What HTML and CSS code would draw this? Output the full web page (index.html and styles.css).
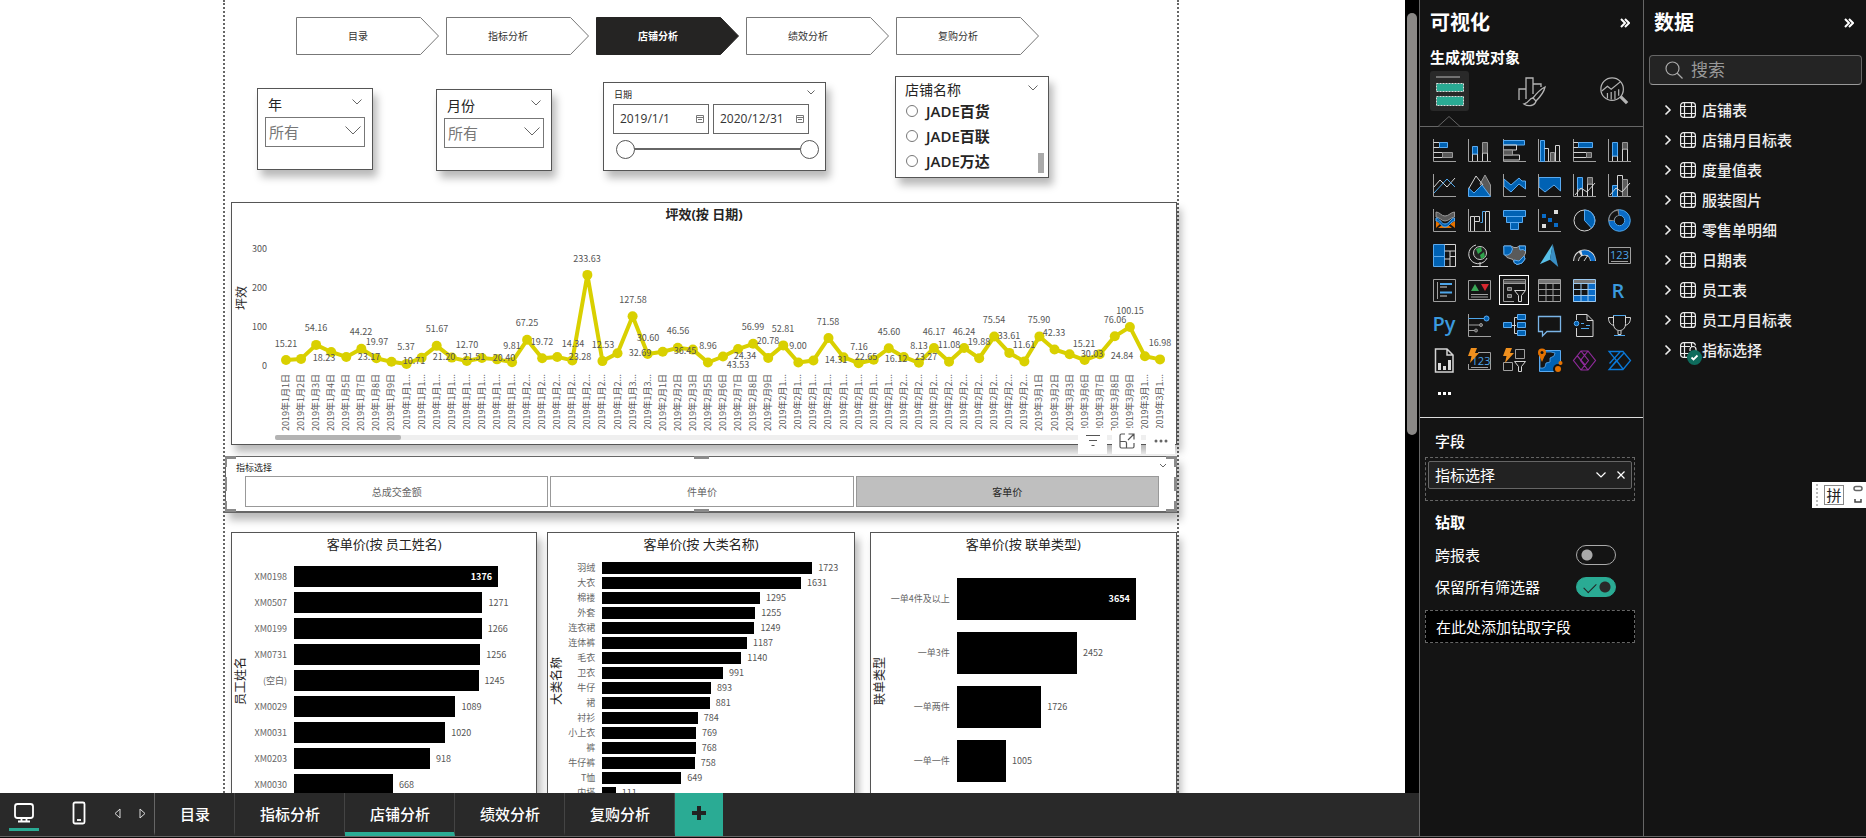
FILE: index.html
```html
<!DOCTYPE html>
<html lang="zh-CN">
<head>
<meta charset="utf-8">
<title>店铺分析</title>
<link rel="stylesheet" href="styles.css">
</head>
<body>
<div class="app">
  <main class="workspace">
    <div class="stage">
      <div class="canvas">
        <div class="page">
          <nav class="steps">
            <button class="step"><svg viewBox="0 0 143 38"><path d="M.5.5H124.500L142.500 19 124.500 37.500H.5Z"/></svg><span>目录</span></button>
            <button class="step"><svg viewBox="0 0 143 38"><path d="M.5.5H124.500L142.500 19 124.500 37.500H.5Z"/></svg><span>指标分析</span></button>
            <button class="step current"><svg viewBox="0 0 143 38"><path d="M.5.5H124.500L142.500 19 124.500 37.500H.5Z"/></svg><span>店铺分析</span></button>
            <button class="step"><svg viewBox="0 0 143 38"><path d="M.5.5H124.500L142.500 19 124.500 37.500H.5Z"/></svg><span>绩效分析</span></button>
            <button class="step"><svg viewBox="0 0 143 38"><path d="M.5.5H124.500L142.500 19 124.500 37.500H.5Z"/></svg><span>复购分析</span></button>
          </nav>

          <div class="slicers">
            <section class="card slicer year">
              <header><label for="year">年</label><svg class="chev" viewBox="0 0 10 6"><path d="M.5.5 5 5 9.500.5"/></svg></header>
              <div class="field"><select id="year"><option>所有</option></select><svg viewBox="0 0 16 9"><path d="M.5.5 8 8 15.500.5"/></svg></div>
            </section>
            <section class="card slicer month">
              <header><label for="month">月份</label><svg class="chev" viewBox="0 0 10 6"><path d="M.5.5 5 5 9.500.5"/></svg></header>
              <div class="field"><select id="month"><option>所有</option></select><svg viewBox="0 0 16 9"><path d="M.5.5 8 8 15.500.5"/></svg></div>
            </section>
            <section class="card slicer dates">
              <header><span>日期</span><svg class="chev" viewBox="0 0 10 6"><path d="M1.500.5 5 4 8.500.5"/></svg></header>
              <div class="range">
                <div class="date"><input type="text" value="2019/1/1" aria-label="开始日期"><svg viewBox="0 0 8 8"><path d="M.5.5h7v7h-7zM.5 2.500h7M2 4.500h4"/></svg></div>
                <div class="date"><input type="text" value="2020/12/31" aria-label="结束日期"><svg viewBox="0 0 8 8"><path d="M.5.5h7v7h-7zM.5 2.500h7M2 4.500h4"/></svg></div>
              </div>
              <div class="slider"><input type="range" value="0" aria-label="开始"><input type="range" value="100" aria-label="结束"></div>
            </section>
            <section class="card slicer shops">
              <header><span>店铺名称</span><svg class="chev" viewBox="0 0 10 6"><path d="M.5.5 5 5 9.500.5"/></svg></header>
              <div class="options">
                <div>
                  <label><input type="radio" name="shop">JADE百货</label>
                  <label><input type="radio" name="shop">JADE百联</label>
                  <label><input type="radio" name="shop">JADE万达</label>
                </div>
                <i class="thumb"></i>
              </div>
            </section>
          </div>

          <section class="card trend">
            <h2>坪效(按 日期)</h2>
            <svg id="trend" viewBox="232 227 944 217"></svg>
            <div class="visual-tools">
              <button aria-label="筛选"><svg viewBox="0 0 18 18"><path d="M2 3.500h14M5 8.500h8M7.500 13.500h3"/></svg></button>
              <button aria-label="焦点模式"><svg viewBox="0 0 18 18"><path d="M7 2H3.500A1.500 1.500 0 0 0 2 3.500v11A1.500 1.500 0 0 0 3.500 16h11a1.500 1.500 0 0 0 1.500-1.500V11M2 9.500h5A1.500 1.500 0 0 1 8.500 11v5M10.500 2H16v5.500M16 2l-6 6"/></svg></button>
              <button aria-label="更多"><svg class="solid" viewBox="0 0 18 18"><circle cx="4" cy="9" r="1.500"/><circle cx="9" cy="9" r="1.500"/><circle cx="14" cy="9" r="1.500"/></svg></button>
            </div>
          </section>

          <section class="card metric">
            <header><span>指标选择</span><svg class="chev" viewBox="0 0 10 6"><path d="M2 1 5 4 8 1"/></svg></header>
            <div class="choices">
              <button>总成交金额</button>
              <button>件单价</button>
              <button class="picked">客单价</button>
            </div>
          </section>

          <div class="charts">
            <section class="card bars staff"><h2>客单价(按 员工姓名)</h2><div class="plot"><span class="axis">员工姓名</span><div class="rows" id="staff"></div></div></section>
            <section class="card bars kinds"><h2>客单价(按 大类名称)</h2><div class="plot"><span class="axis">大类名称</span><div class="rows" id="kinds"></div></div></section>
            <section class="card bars orders"><h2>客单价(按 联单类型)</h2><div class="plot"><span class="axis">联单类型</span><div class="rows" id="orders"></div></div></section>
          </div>
        </div>
      </div>
      <div class="scroll"><i></i></div>
    </div>

    <nav class="tabs">
      <button class="device on" aria-label="桌面布局"><svg viewBox="0 0 22 22"><rect x="2" y="2" width="18" height="14" rx="2.500"/><path d="M8.500 16v3M13.500 16v3M5 19.500h12"/></svg></button>
      <button class="device phone" aria-label="移动布局"><svg viewBox="0 0 14 24"><rect x="1.500" y="1.500" width="11" height="21" rx="1.500"/><path d="M5 19h4"/></svg></button>
      <button class="arrow" aria-label="上一页"><svg viewBox="0 0 7 11"><path d="M6 1v9L1 5.500Z"/></svg></button>
      <button class="arrow" aria-label="下一页"><svg viewBox="0 0 7 11"><path d="M1 1v9l5-4.500Z"/></svg></button>
      <button class="tab first">目录</button>
      <button class="tab">指标分析</button>
      <button class="tab active">店铺分析</button>
      <button class="tab">绩效分析</button>
      <button class="tab">复购分析</button>
      <button class="add" aria-label="新建页"><svg viewBox="0 0 14 14"><path d="M7 0v14M0 7h14"/></svg></button>
    </nav>
  </main>

  <aside class="pane visuals">
    <header class="pane-head"><h1>可视化</h1><button aria-label="折叠"><svg viewBox="0 0 10 10"><path d="M1 1l4 4-4 4M5 1l4 4-4 4"/></svg></button></header>
    <h3>生成视觉对象</h3>
    <div class="modes">
      <button class="on" aria-label="生成"><svg viewBox="0 0 30 32"><path d="M1 2h24" stroke="#bbb"/><g fill="#2aab94" stroke="#ddd" stroke-dasharray="2 1"><rect x="1.500" y="8.500" width="27" height="8"/><rect x="1.500" y="21.500" width="27" height="9"/></g></svg></button>
      <button aria-label="格式"><svg viewBox="0 0 30 32"><g fill="none" stroke="#b4b4b4" stroke-width="1.300"><path d="M2 25V14h7V3h7v16M9 14v10M16 9h8v3"/><path d="M28 12c-4 2-9 7-12 11l3 3c4-4 8-9 9-14Z"/><path d="M16 23c-4 0-4 5-9 6 4 3 11 2 12-3"/></g></svg></button>
      <button aria-label="分析"><svg viewBox="0 0 32 32"><g fill="none" stroke="#b4b4b4" stroke-width="1.300"><circle cx="14" cy="14" r="12"/><path d="M3 16l6-5 4 3 10-8M9 18v6M13 17v8M17 16v9M21 14v7"/><path d="M23 22l7 7" stroke-width="3.500"/></g></svg></button>
    </div>
    <svg class="notch" viewBox="0 0 22 11"><path d="M0 10.500 11 .5l11 10"/></svg>
    <div class="gallery" id="gallery">
      <button aria-label="堆积条形图"><svg viewBox="0 0 23 23"><path class="ax" d="M.5 0V22.500H23"/><path class="w" d="M.5 3.500h6v5h-6M.5 13.500h9v5h-9"/><path class="b" d="M6.500 3.500h8v5h-8z"/><path class="g" d="M9.500 13.500h10v5h-10z"/></svg></button>
      <button aria-label="堆积柱形图"><svg viewBox="0 0 23 23"><path class="ax" d="M.5 0V22.500H23"/><path class="w" d="M4.500 22v-7h5v7M14.500 22v-8h5v8"/><path class="b" d="M4.500 7.500h5v7.500h-5z"/><path class="g" d="M14.500 3.500h5v10.500h-5z"/></svg></button>
      <button aria-label="簇状条形图"><svg viewBox="0 0 23 23"><path class="ax" d="M.5 0V22.500H23"/><path class="b" d="M.5 1.500h21v4.500h-21z"/><path class="w" d="M.5 6h13v5H.5M.5 16h16v5H.5"/><path class="g" d="M.5 11h9v5h-9z"/></svg></button>
      <button aria-label="簇状柱形图"><svg viewBox="0 0 23 23"><path class="ax" d="M.5 0V22.500H23"/><path class="b" d="M2.500 1.500h4v21h-4z"/><path class="w" d="M6.500 9.500h4v13M17.500 22V6.500h4V22"/><path class="g" d="M12.500 13.500h4v9h-4z"/></svg></button>
      <button aria-label="百分比堆积条形图"><svg viewBox="0 0 23 23"><path class="ax" d="M.5 0V22.500H23"/><path class="w" d="M.5 3.500h5v5h-5M.5 13.500h13v5H.5"/><path class="b" d="M5.500 3.500h14v5h-14z"/><path class="g" d="M13.500 13.500h5v5h-5z"/></svg></button>
      <button aria-label="百分比堆积柱形图"><svg viewBox="0 0 23 23"><path class="ax" d="M.5 0V22.500H23"/><path class="w" d="M4.500 22v-5h5v5M14.500 22V10h5v12"/><path class="b" d="M4.500 3.500h5V17h-5z"/><path class="g" d="M14.500 3.500h5V10h-5z"/></svg></button>

      <button aria-label="折线图"><svg viewBox="0 0 23 23"><path class="ax" d="M.5 0V22.500H23"/><path class="w" d="M1 13 7 6l7 7 8-9"/><path class="l" d="M1 19 14 5l8 8"/></svg></button>
      <button aria-label="分区图"><svg viewBox="0 0 23 23"><path class="g" d="M12 10 17 1l5.500 10v11z"/><path class="w" d="M.5 15 8 2l7 9M.5 15v7"/><path class="b" d="M.5 14 6 19l8-8 8.500 11.500H.5Z"/></svg></button>
      <button aria-label="堆积面积图"><svg viewBox="0 0 23 23"><path class="b" d="M1 5l7 6 8-7 3 3h3.500v8L16 10l-8 8-7-6Z"/><path class="ax" d="M.5 0V22.500H23"/></svg></button>
      <button aria-label="百分比堆积面积图"><svg viewBox="0 0 23 23"><path class="b" d="M1 3.500h21.500V17L16 11l-9 7-6-5Z"/><path class="ax" d="M.5 0V22.500H23"/></svg></button>
      <button aria-label="折线和堆积柱形图"><svg viewBox="0 0 23 23"><path class="ax" d="M.5 0V22.500H23"/><path class="w" d="M4.500 22v-8h5v8M14.500 22V10h5v12"/><path class="b" d="M4.500 3.500h5V15h-5z"/><path class="g" d="M14.500 3.500h5V10h-5z"/><path class="w" d="M2 21l6-7 6 4 8-9"/></svg></button>
      <button aria-label="折线和簇状柱形图"><svg viewBox="0 0 23 23"><path class="ax" d="M.5 0V22.500H23"/><path class="b" d="M4.500 11.500h5v11h-5z"/><path class="w" d="M9.500 22V1.500h5V22"/><path class="g" d="M14.500 5.500h5v17h-5z"/><path class="w" d="M2 21l6-7 6 4 8-9"/></svg></button>

      <button aria-label="功能区图表"><svg viewBox="0 0 23 23"><path d="M3 12l4 3-4 4zM22 12l-5 3 5 4zM5 19l4-3h6l4 3z" fill="#e57200"/><path class="g" d="M3 3c4 0 5 4 9 4s6-4 9.500-4v5c-3.500 0-5.500 4-9.500 4S7 8 3 8z"/><path class="b" d="M3 9c4 0 5 6 9 6s6-6 9.500-6v3c-3.500 0-5.500 6-9.500 6s-5-6-9-6z"/><path class="ax" d="M.5 0V22.500H23"/></svg></button>
      <button aria-label="瀑布图"><svg viewBox="0 0 23 23"><path class="ax" d="M.5 0V22.500H23"/><path class="w" d="M2.500 22V7.500h4V22M6.500 7.500h5v5h-5M17.500 22V2.500h4V22"/><path class="l" d="M12.500 13.500h2v-11h3"/></svg></button>
      <button aria-label="漏斗图"><svg viewBox="0 0 23 23"><path class="b" d="M.5 1.500h22v6H.5zM3.500 7.500h16v6h-16zM7.500 13.500h8v7h-8z"/></svg></button>
      <button aria-label="散点图"><svg viewBox="0 0 23 23"><path class="ax" d="M.5 0V22.500H23"/><path fill="#0a6cc8" d="M4 5h4v4H4zM10 9h4v4h-4zM16 14h4v4h-4z"/><path fill="#ddd" d="M16 1h4v4h-4zM4 15h4v4H4z"/></svg></button>
      <button aria-label="饼图"><svg viewBox="0 0 23 23"><circle class="w" cx="11.500" cy="11.500" r="10.500"/><path class="b" d="M11.500 1a10.500 10.500 0 0 1 7 18L11.500 11.500Z"/></svg></button>
      <button aria-label="环形图"><svg viewBox="0 0 23 23"><circle cx="11.500" cy="11.500" r="8" fill="none" stroke="#0a6cc8" stroke-width="5.500"/><circle class="l" cx="11.500" cy="11.500" r="10.800"/><circle class="l" cx="11.500" cy="11.500" r="5.200"/><path d="M3.500 12a8 8 0 0 1 7.500-8.500" fill="none" stroke="#888" stroke-width="6.500"/><path d="M3.500 11a8 8 0 0 1 6.500-7" fill="none" stroke="#141414" stroke-width="4.500"/></svg></button>

      <button aria-label="树状图"><svg viewBox="0 0 23 23"><path class="b" d="M.5.5h11v12H.5zM.5 12.500h11v10H.5z"/><path class="w" d="M11.500.5h11v22h-11M11.500 7h11M17 7v15.500M11.500 15H17M17 12.500h5.500"/></svg></button>
      <button aria-label="地图"><svg viewBox="0 0 23 23"><circle cx="12" cy="9" r="6.500" fill="#222" stroke="#ccc"/><path d="M8 5l5-2 1 4-4 3zM12 11l4-3 1 5-4 2z" fill="#2fa34b"/><path class="w" d="M8 1a9.500 9.500 0 1 0 11 13M12 18v4M4 22.500h16"/></svg></button>
      <button aria-label="着色地图"><svg viewBox="0 0 23 23"><path d="M1 2h7l3 1.500h3L16 2h6.500v7L21 12l1 3-3 4-5 1.500-3-2-1-3-6-2-3-4z" fill="#5a5a5a" stroke="#aaa"/><path class="b" d="M.8 2H8l1.500 3L8 9l-3 2H1zM16 2h6.500v5L20 5.500 17 6zM11 16l5 1 5-5 1 3-3 4-5 1.500-3-2z"/></svg></button>
      <button aria-label="Azure 地图"><svg viewBox="0 0 23 25"><path d="M15 0 1 22l11-5z" fill="#58c0e8"/><path d="M15 0l6 25-9-8z" fill="#3a8fc4"/></svg></button>
      <button aria-label="仪表"><svg viewBox="0 0 23 23"><path d="M3 17a8.500 8.500 0 0 1 17 0" fill="none" stroke="#ddd" stroke-width="6"/><path d="M3 17a8.500 8.500 0 0 1 4-7" fill="none" stroke="#222" stroke-width="4"/><path d="M9 9a8.500 8.500 0 0 1 11 8" fill="none" stroke="#0a6cc8" stroke-width="4.500"/><path class="w" d="M11 17l4-6"/></svg></button>
      <button aria-label="卡片"><svg viewBox="0 0 23 23"><path class="ax" d="M.5 3.500h22v16H.5zM3 17.500h17"/><text x="11.500" y="15" text-anchor="middle" class="num">123</text></svg></button>

      <button aria-label="多行卡"><svg viewBox="0 0 23 23"><path class="ax" d="M.5.500h22v22H.5zM4.500 3v17"/><path class="w" d="M7 8h7M7 17h7"/><path class="l" stroke-width="2" d="M7 5h12M7 13.500h12"/></svg></button>
      <button aria-label="KPI"><svg viewBox="0 0 23 23"><path class="ax" d="M.5 1.500h22v19H.5zM3 15.500h17M3 18h17"/><path d="M3 12 7 5l4 7z" fill="#3aa655"/><path d="M13 5h8l-4 7z" fill="#d8282f"/></svg></button>
      <button class="selected" aria-label="切片器"><svg viewBox="0 0 23 23"><path class="ax" d="M11 22.500H.5V.5h22V11M.5 4.500h22"/><path d="M1 1.500h21v2.500H1z" fill="#666"/><path class="g" d="M4.500 8.500h4v3h-4zM4.500 15.500h4v3h-4z"/><path class="w" d="M11.500 11.500h11l-4 5v6h-3v-6z"/></svg></button>
      <button aria-label="表"><svg viewBox="0 0 23 23"><path d="M1 1h21v3H1z" fill="#777"/><path class="ax" d="M.5.500h22v22H.5zM.5 4.500h22M.5 10.500h22M.5 16.500h22M8 4.500v18M15 4.500v18"/></svg></button>
      <button aria-label="矩阵"><svg viewBox="0 0 23 23"><path d="M1 1h21v3H1z" fill="#777"/><path fill="#0a6cc8" d="M15 5h8v18H0v-6h15z"/><path stroke="#9cc8ee" fill="none" d="M.5.500h22v22H.5zM.5 4.500h22M.5 10.500h22M.5 16.500h22M8 4.500v18M15 4.500v18"/></svg></button>
      <button aria-label="R 脚本"><svg viewBox="0 0 23 23"><text x="10" y="19" text-anchor="middle" class="lang">R</text></svg></button>

      <button aria-label="Python 脚本"><svg viewBox="0 0 23 23"><text x="11" y="17" text-anchor="middle" class="lang">Py</text></svg></button>
      <button aria-label="关键影响者"><svg viewBox="0 0 23 23"><path class="ax" d="M.5 0V22.500H23M.5 11H12M.5 16.500H7"/><path class="l" d="M.5 4.500H16"/><circle class="b" cx="18.500" cy="4.500" r="2.500"/><circle class="g" cx="13" cy="11" r="1.500"/><circle class="g" cx="8" cy="16.500" r="1.500"/></svg></button>
      <button aria-label="分解树"><svg viewBox="0 0 23 23"><path class="w" d="M8 11.500h5M14 3.500h-2.500v16H14"/><path class="b" d="M.5 8.500h8v5h-8zM14.500.5h8v5h-8zM14.500 8.500h8v5h-8zM14.500 16.500h8v5h-8z"/></svg></button>
      <button aria-label="问答"><svg viewBox="0 0 23 23"><path d="M.5 2.500h22v15H9L4.500 22v-4.500h-4z" fill="none" stroke="#7ab4e6" stroke-width="1.300"/></svg></button>
      <button aria-label="智能叙述"><svg viewBox="0 0 23 23"><path class="w" d="M3.500 6V.5H14l6 6v16H3.500V14M14 .5v6h6"/><circle class="b" cx="3.500" cy="9.500" r="2.300"/><path class="l" d="M8 9.500h3M8 14.500h8M13 11.500h4"/></svg></button>
      <button aria-label="目标"><svg viewBox="0 0 23 23"><path class="w" d="M5.500 1.500h12v8c0 5-3 7-6 7s-6-2-6-7zM5.500 3.500H.5c0 5 2 7 5.500 8M17.500 3.500h5c0 5-2 7-5.500 8M10 16.500v4h3v-4"/><path class="l" d="M5.500 1.500h12M6 21.500h11"/></svg></button>

      <button aria-label="分页报表"><svg viewBox="0 0 23 23"><path class="w" stroke-width="1.500" d="M2.500 0H14l6 6v17H2.500zM14 0v6h6"/><path fill="#ddd" d="M5 14h3v7H5zM10 17h3v4h-3zM15 11h3v10h-3z"/></svg></button>
      <button aria-label="新卡片"><svg viewBox="0 0 23 23"><path class="ax" d="M10 3.500h12.500v17H.5V15M3 18.500h17"/><text x="13" y="16" text-anchor="middle" class="num">123</text><path d="M3-1h6L7 4h4L2 14l1.500-7H0z" fill="#f0901e"/></svg></button>
      <button aria-label="新切片器"><svg viewBox="0 0 23 23"><path class="ax" d="M12.500.5h9v9h-9zM.5 13.500h9v8h-9z"/><path class="w" d="M11.500 12.500h11l-4 5v5h-3v-5z"/><path d="M3-1h6L7 4h4L2 14l1.500-7H0z" fill="#f0901e"/></svg></button>
      <button aria-label="ArcGIS"><svg viewBox="0 0 23 23"><path class="b" d="M1.500 1.500h21v21h-21z"/><path d="M2 3h11l4 1-1 3-4 2v4l-4 1-1 4-2 1H2z" fill="#141414" stroke="#5aaaf0" stroke-width=".8"/><circle cx="4" cy="3.500" r="4" fill="#e57200"/><path d="M.5 5h7L4 13z" fill="#e57200"/><circle cx="4" cy="3.500" r="1.500" fill="#141414"/><circle cx="20" cy="20" r="5" fill="#141414"/><circle cx="20" cy="20" r="3" fill="#e57200"/><circle cx="22.500" cy="14" r="2" fill="#e57200"/></svg></button>
      <button aria-label="Power Apps"><svg viewBox="0 0 23 23"><path d="M8 2h7l7.500 9.500L15 21H8L.5 11.500zM8 2l7.500 9.500L8 21M15 2 7.500 11.500 15 21M4 6.500l8 9.500" fill="none" stroke="#8e2a9a" stroke-width="1.200"/></svg></button>
      <button aria-label="Power Automate"><svg viewBox="0 0 23 23"><path d="M1 2.500h14l7.500 9-7.500 9H1l7.500-9zM12 3 1.500 14.500M16 4 1.500 20M8.500 11.500 15 20" fill="none" stroke="#0a78d8" stroke-width="1.300"/></svg></button>
      <button aria-label="更多视觉对象"><svg viewBox="0 0 23 23"><path fill="#fff" d="M5 8h3v3H5zM10 8h3v3h-3zM15 8h3v3h-3z"/></svg></button>
    </div>

    <div class="wells">
      <h4>字段</h4>
      <div class="well"><div class="pill"><span>指标选择</span><button aria-label="菜单"><svg viewBox="0 0 12 12"><path d="M1.500 3.500 6 8l4.500-4.500"/></svg></button><button aria-label="删除"><svg viewBox="0 0 12 12"><path d="M2.500 2.500l7 7M9.500 2.500l-7 7"/></svg></button></div></div>
      <h4 class="strong">钻取</h4>
      <label class="toggle">跨报表<input type="checkbox"></label>
      <label class="toggle">保留所有筛选器<input type="checkbox" checked></label>
      <div class="drop">在此处添加钻取字段</div>
    </div>
  </aside>

  <aside class="pane data">
    <header class="pane-head"><h1>数据</h1><button aria-label="折叠"><svg viewBox="0 0 10 10"><path d="M1 1l4 4-4 4M5 1l4 4-4 4"/></svg></button></header>
    <div class="search"><svg viewBox="0 0 18 18"><circle cx="7.500" cy="7.500" r="6.500"/><path d="M12 12l5.500 5.500"/></svg><input type="text" placeholder="搜索" aria-label="搜索"></div>
    <ul class="tables" id="tables"></ul>
  </aside>

  <footer class="status"></footer>

  <div class="ime"><i class="grip"></i><b>拼</b><svg viewBox="0 0 10 20"><path d="M3 1.500h4a2 2 0 0 1 0 4H3a2 2 0 0 1 0-4Z" stroke="#666"/><path d="M2 14v3h6v-3" stroke="#444"/></svg></div>
</div>
<script src="charts.js"></script>
</body>
</html>
```

FILE: styles.css
```css
* { box-sizing: border-box; }
body, h1, h2, h3, h4, ul { margin: 0; padding: 0; }
body {
  font-family: "Open Sans", "Noto Sans CJK SC", sans-serif;
  font-size: 15px;
  line-height: 20px;
  color: #fff;
  background: #141414;
}
button, input, select { font: inherit; color: inherit; }
button { background: none; border: 0; padding: 0; margin: 0; cursor: pointer; }
svg { display: block; }

.app {
  position: relative;
  display: grid;
  grid-template-columns: minmax(0, 1fr) 224px 223px;
  grid-template-rows: minmax(0, 1fr) 2px;
  height: 100vh;
  overflow: hidden;
}
.status { grid-column: 1 / -1; background: #0a0a0a; border-top: 1px solid #666; }

/* workspace */
.workspace { display: flex; flex-direction: column; min-width: 0; min-height: 0; }
.stage { flex: 1; display: flex; min-height: 0; overflow: hidden; }
.canvas { flex: 1; min-width: 0; padding: 0 226px 0 223px; background: #fff; overflow: hidden; }
.scroll { width: 14px; padding: 13px 2px; background: #000; }
.scroll i { display: block; width: 10px; height: 422px; border-radius: 5px; background: #8a8886; }
.page {
  min-height: 100%;
  padding-top: 17px;
  border: 0 dotted #666;
  border-width: 0 2px;
  color: #252423;
}

.steps { display: grid; grid-template-columns: repeat(5, 1fr); gap: 7px; padding: 0 138px 0 71px; }
.step { display: grid; align-items: center; font-size: 10px; line-height: 14px; color: #333; }
.step > * { grid-area: 1 / 1; }
.step svg { width: 100%; fill: #fff; stroke: #777; }
.step span { padding-right: 19px; }
.step.current svg { fill: #252423; stroke: #252423; }
.step.current { color: #fff; font-weight: 700; }

.card { background: #fff; border: 1px solid #555; box-shadow: 4px 7px 8px rgba(0, 0, 0, .28); }
.chev { width: 10px; height: 6px; fill: none; stroke: #666; }

.slicers { display: flex; align-items: flex-start; padding: 21px 0 24px 32px; }
.slicer header { display: flex; justify-content: space-between; align-items: center; }
.year { width: 116px; margin-top: 12px; }
.month { width: 116px; margin: 13px 0 0 63px; }
.year, .month { height: 82px; padding: 4px 7px; }
.year header, .month header { height: 24px; padding: 0 3px; font-size: 14px; }
.year .chev, .month .chev { margin-bottom: 6px; }
.field { display: grid; align-items: center; }
.field > * { grid-area: 1 / 1; }
.field select {
  appearance: none;
  width: 100%;
  height: 30px;
  padding: 0 3px;
  border: 1px solid #777;
  border-radius: 0;
  background: #fff;
  color: #777;
}
.field svg { justify-self: end; width: 16px; height: 9px; margin: 0 4px 4px 0; fill: none; stroke: #666; pointer-events: none; }

.dates { width: 223px; height: 89px; margin: 6px 0 0 51px; padding: 3px 9px; }
.dates header { height: 18px; padding: 0 0 0 1px; font-size: 9px; }
.dates .chev { margin-bottom: 4px; }
.range { display: grid; grid-template-columns: 96px 96px; gap: 4px; }
.date { display: flex; align-items: center; height: 30px; border: 1px solid #666; padding: 0 4px 0 6px; }
.date input { flex: 1; min-width: 0; padding: 0; border: 0; outline: 0; font-size: 12px; color: #333; background: none; }
.date svg { width: 8px; height: 8px; fill: none; stroke: #777; }
.slider {
  display: grid;
  margin: 5px 0 0 3px;
  width: 203px;
  background: linear-gradient(#666, #666) center / 180px 2px no-repeat;
}
.slider input { grid-area: 1 / 1; appearance: none; width: 100%; height: 20px; margin: 0; background: none; pointer-events: none; }
.slider input::-webkit-slider-thumb {
  appearance: none;
  width: 19px;
  height: 19px;
  border: 1px solid #555;
  border-radius: 50%;
  background: #fff;
  pointer-events: auto;
}

.shops { width: 154px; height: 102px; margin-left: 69px; padding: 5px 4px 0 9px; }
.shops header { height: 16px; padding-right: 6px; font-size: 14px; }
.shops .chev { margin-bottom: 4px; }
.options { display: flex; justify-content: space-between; align-items: flex-end; }
.options label { display: flex; align-items: center; gap: 8px; height: 25px; font-weight: 600; font-size: 15px; }
.options input { appearance: none; width: 12px; height: 12px; margin: 0 0 0 1px; border: 1px solid #777; border-radius: 50%; }
.thumb { width: 6px; height: 20px; background: #aaa; }

h2 { height: 24px; font-size: 13px; line-height: 22px; font-weight: 400; text-align: center; }
.trend { position: relative; margin-left: 6px; }
.trend h2 { font-weight: 700; }
#trend { width: 100%; }
#trend text { font-family: "Noto Sans CJK SC", sans-serif; font-size: 9px; fill: #555; }
#trend .name { font-size: 12px; fill: #252423; }
#trend polyline { fill: none; stroke: #d9d000; stroke-width: 4; stroke-linejoin: round; }
#trend circle { fill: #d9d000; }
.visual-tools { position: absolute; right: 1px; bottom: -10px; display: flex; gap: 5px; }
.visual-tools button { display: grid; place-items: center; width: 29px; height: 26px; background: #fff; }
.visual-tools svg { width: 18px; height: 18px; fill: none; stroke: #555; stroke-width: 1.2; }
.visual-tools .solid { fill: #666; stroke: none; }

.metric { position: relative; margin-top: 11px; padding: 2px 17px 4px 10px; border: 2px solid #666; border-width: 1px 1px 2px; }
.metric::after {
  content: "";
  position: absolute;
  inset: -1px;
  pointer-events: none;
  --h: linear-gradient(#8a8a8a, #8a8a8a);
  background:
    var(--h) 0 0 / 11px 3px, var(--h) 50% 0 / 15px 3px, var(--h) 100% 0 / 11px 3px,
    var(--h) 0 100% / 11px 3px, var(--h) 50% 100% / 15px 3px, var(--h) 100% 100% / 11px 3px,
    var(--h) 0 0 / 2px 11px, var(--h) 0 50% / 2px 14px, var(--h) 0 100% / 2px 11px,
    var(--h) 100% 0 / 3px 11px, var(--h) 100% 50% / 3px 14px, var(--h) 100% 100% / 3px 11px;
  background-repeat: no-repeat;
}
.metric header { display: flex; justify-content: space-between; height: 17px; margin-right: -9px; font-size: 9px; line-height: 17px; }
.metric .chev { margin-top: 4px; }
.choices { display: grid; grid-template-columns: repeat(3, 1fr); gap: 2px; margin-left: 9px; }
.choices button { height: 31px; border: 1px solid #999; font-size: 10px; color: #666; }
.choices .picked { background: #bfbfbf; color: #252423; }

.charts { display: grid; grid-template-columns: 1fr 1fr 1fr; column-gap: 12px; margin: 19px 0 0 6px; }
.staff { margin-right: 1px; }
.kinds { margin: 0 3px 0 -3px; }
.plot { display: flex; }
.axis { width: 18px; padding-bottom: 100px; align-self: flex-start; font-size: 12px; line-height: 18px; writing-mode: vertical-rl; text-orientation: sideways; transform: rotate(180deg); }
.rows { flex: 1; display: flex; flex-direction: column; min-width: 0; font-family: "Noto Sans CJK SC", sans-serif; font-size: 9px; color: #555; }
.row { display: flex; align-items: center; }
.row .label { flex: none; padding-right: 7px; text-align: right; line-height: 12px; white-space: nowrap; color: #666; }
.row .track { flex: 1; display: flex; align-items: center; gap: 6px; min-width: 0; line-height: 12px; }
.row .bar { display: flex; flex: none; align-items: center; justify-content: flex-end; height: 100%; padding-right: 6px; background: #000; color: #fff; font-weight: 700; }
.staff .rows { gap: 5px; padding-top: 9px; }
.staff .track { height: 21px; }
.staff .label { width: 44px; }
.kinds .rows { gap: 3px; padding-top: 5px; }
.kinds .track { height: 12px; }
.kinds .label { width: 36px; }
.orders .rows { gap: 12px; padding-top: 21px; }
.orders .track { height: 42px; }
.orders .label { width: 68px; }

/* page tabs */
.tabs { display: flex; height: 43px; background: #292929; }
.device { width: 30px; height: 38px; margin-left: 9px; border-bottom: 3px solid transparent; }
.device svg { width: 22px; height: 22px; margin: 4px auto 0; fill: none; stroke: #fff; stroke-width: 1.8; }
.device.on { border-color: #2aab94; }
.device.phone { width: 30px; margin: 0 18px 0 25px; }
.device.phone svg { width: 14px; height: 24px; }
.arrow { width: 25px; padding-bottom: 3px; }
.arrow svg { width: 7px; height: 11px; fill: none; stroke: #ddd; margin-left: 2px; }
.tab { padding: 3px 24px 0 25px; border-right: 1px solid #444; border-bottom: 4px solid transparent; font-weight: 500; }
.tab.first { border-left: 1px solid #666; margin-left: -8px; }
.tab.active { border-bottom-color: #2aab94; }
.add { display: grid; place-items: center; width: 48px; padding-bottom: 3px; background: #2aab94; }
.add svg { width: 14px; height: 14px; stroke: #222; stroke-width: 4; }

/* side panes */
.pane { min-width: 0; border-left: 1px solid #666; background: #141414; }
.pane-head { display: flex; justify-content: space-between; align-items: center; height: 45px; padding: 0 13px 0 10px; }
.pane-head h1 { font-size: 20px; line-height: 24px; font-weight: 700; }
.pane-head svg { width: 10px; height: 10px; fill: none; stroke: #fff; stroke-width: 2; }
.data .pane-head { padding-right: 12px; }
.visuals h3 { padding: 2px 10px 4px; font-size: 15px; line-height: 20px; font-weight: 700; }
.modes { display: flex; justify-content: space-between; padding: 0 10px; }
.modes button { display: grid; place-items: center; width: 39px; height: 40px; border-radius: 3px; }
.modes .on { background: #292929; }
.modes svg { width: 30px; height: 32px; }
.notch { width: 22px; height: 11px; margin: 5px 0 0 18px; fill: #141414; stroke: #666; }
.gallery { display: grid; grid-template-columns: repeat(6, 35px); grid-auto-rows: 35px; padding: 6px 7px 0; border-top: 1px solid #666; margin-top: -1px; }
.notch { position: relative; z-index: 1; }
.gallery button { display: grid; place-items: center; width: 30px; height: 30px; margin: 2px; border: 1px solid transparent; }
.gallery .selected { border-color: #fff; }
.gallery svg { width: 23px; height: 23px; overflow: visible; }
.ax { fill: none; stroke: #a0a0a0; }
.w { fill: none; stroke: #d4d4d4; }
.g { fill: #5a5a5a; stroke: #999; }
.b { fill: #0062b4; stroke: #5aaaf0; }
.l { fill: none; stroke: #4ea6ea; }
.num { font-size: 11px; fill: #4ea6ea; }
.lang { font-size: 20px; font-weight: 600; fill: #3b9ade; }

.wells { margin-top: 4px; padding: 13px 8px 0 5px; border-top: 1px solid #ddd; }
.wells h4 { padding-left: 10px; font-size: 15px; line-height: 20px; font-weight: 500; }
.wells .strong { margin: 11px 0 7px; font-weight: 700; }
.well { height: 44px; margin-top: 6px; padding: 3px 2px; border: 1px dashed #666; }
.pill { display: flex; align-items: center; gap: 8px; height: 28px; padding: 0 4px 0 6px; border: 1px solid #666; border-radius: 2px; background: #222; }
.pill span { flex: 1; }
.pill svg { width: 12px; height: 12px; fill: none; stroke: #fff; stroke-width: 1.2; }
.toggle { display: flex; justify-content: space-between; align-items: center; height: 32px; padding: 0 19px 0 10px; }
.toggle input {
  appearance: none;
  width: 40px;
  height: 20px;
  margin: 0;
  border: 1px solid #aaa;
  border-radius: 10px;
  background: radial-gradient(circle at 10px 9px, #aaa 5px, transparent 6px);
}
.toggle input:checked {
  display: grid;
  border-color: #2aab94;
  background: radial-gradient(circle at 28px 9px, #292929 5px, #2aab94 6px);
}
.toggle input:checked::before {
  content: "";
  width: 11px;
  height: 6px;
  margin: 5px 0 0 7px;
  border: solid #222;
  border-width: 0 0 1px 1px;
  transform: rotate(-45deg);
}
.drop { margin-top: 7px; padding: 6px 10px 5px; border: 1px dashed #666; background: #000; }

.search { display: flex; align-items: center; gap: 8px; height: 30px; margin: 10px 4px 10px 5px; padding: 0 15px; border: 1px solid #666; border-bottom-color: #999; border-radius: 4px; background: #242424; }
.search svg { width: 18px; height: 18px; fill: none; stroke: #aaa; stroke-width: 1.2; }
.search input { flex: 1; min-width: 0; padding: 0; border: 0; outline: 0; background: none; font-size: 17px; line-height: 22px; }
.search input::placeholder { color: #999; opacity: 1; }
.tables { list-style: none; padding-left: 20px; }
.tables button { display: flex; align-items: center; height: 30px; color: #eee; font-weight: 500; text-align: left; }
.tables svg { fill: none; stroke: #eee; }
.tables .open { width: 8px; height: 12px; margin-right: 8px; stroke-width: 1.6; }
.tables .grid { width: 16px; height: 16px; margin-right: 6px; overflow: visible; stroke-width: 1.2; }

.ime { position: absolute; right: 0; top: 482px; display: flex; align-items: center; width: 54px; height: 26px; padding-left: 4px; background: #fff; color: #222; }
.ime .grip { height: 22px; border-left: 2px dotted #bbb; margin-right: 6px; }
.ime b { width: 20px; height: 20px; border: 1px solid #888; font-size: 15px; line-height: 18px; font-weight: 400; text-align: center; }
.ime svg { width: 10px; height: 20px; margin-left: 9px; fill: none; stroke-width: 1.5; }
```

FILE: charts.js
```js
const days = [
  '1月1日', '1月2日', '1月3日', '1月4日', '1月5日', '1月7日', '1月8日', '1月9日',
  '1月1...', '1月1...', '1月1...', '1月1...', '1月1...', '1月1...', '1月1...', '1月1...',
  '1月2...', '1月2...', '1月2...', '1月2...', '1月2...', '1月2...', '1月2...', '1月3...', '1月3...',
  '2月1日', '2月2日', '2月3日', '2月5日', '2月6日', '2月7日', '2月8日', '2月9日',
  '2月1...', '2月1...', '2月1...', '2月1...', '2月1...', '2月1...', '2月1...', '2月1...',
  '2月2...', '2月2...', '2月2...', '2月2...', '2月2...', '2月2...', '2月2...', '2月2...', '2月2...',
  '3月1日', '3月2日', '3月3日', '3月6日', '3月7日', '3月8日', '3月9日', '3月1...', '3月1...'
];
const values = [
  15.21, 18.23, 54.16, 36, 23.17, 44.22, 19.97, 10.71, 5.37, 21.2, 51.67, 21.51, 12.7, 20.4, 17, 9.81,
  67.25, 19.72, 23.28, 14.34, 233.63, 12.53, 32.69, 127.58, 30.6, 36.45, 46.56, 42, 8.96, 24.34, 43.53,
  56.99, 20.78, 52.81, 9, 14.31, 71.58, 22.65, 7.16, 16.12, 45.6, 23.27, 8.13, 46.17, 11.08, 46.24, 19.88,
  75.54, 33.61, 11.61, 75.9, 42.33, 30.03, 15.21, 30, 76.06, 100.15, 24.84, 16.98
];
const callouts = [
  ['15.21', 286, 344], ['54.16', 316, 328], ['18.23', 324, 358], ['44.22', 361, 332], ['23.17', 369, 357],
  ['19.97', 377, 342], ['5.37', 406, 347], ['10.71', 414, 361], ['51.67', 437, 329], ['21.20', 444, 357],
  ['12.70', 467, 345], ['21.51', 474, 357], ['20.40', 504, 358], ['9.81', 512, 346], ['67.25', 527, 323],
  ['19.72', 542, 342], ['14.34', 573, 344], ['23.28', 580, 357], ['233.63', 587, 259], ['12.53', 603, 345],
  ['127.58', 633, 300], ['30.60', 648, 338], ['32.69', 640, 353], ['46.56', 678, 331], ['36.45', 685, 351],
  ['8.96', 708, 346], ['56.99', 753, 327], ['24.34', 745, 356], ['43.53', 738, 365], ['20.78', 768, 341],
  ['52.81', 783, 329], ['9.00', 798, 346], ['71.58', 828, 322], ['14.31', 836, 360], ['7.16', 859, 347],
  ['22.65', 866, 357], ['45.60', 889, 332], ['16.12', 896, 359], ['8.13', 919, 346], ['23.27', 926, 357],
  ['46.17', 934, 332], ['11.08', 949, 345], ['46.24', 964, 332], ['19.88', 979, 342], ['75.54', 994, 320],
  ['33.61', 1009, 336], ['11.61', 1024, 345], ['75.90', 1039, 320], ['42.33', 1054, 333], ['15.21', 1084, 344],
  ['30.03', 1092, 354], ['76.06', 1115, 320], ['24.84', 1122, 356], ['100.15', 1130, 311], ['16.98', 1160, 343]
];

const px = i => 286 + i * (1160 - 286) / (values.length - 1);
const py = v => 366 - v * 0.39;

let out = '';
for (const t of [0, 100, 200, 300]) out += `<text x="267" y="${py(t) + 3}" text-anchor="end">${t}</text>`;
out += '<text class="name" text-anchor="middle" transform="translate(246 298) rotate(-90)">坪效</text>';
out += `<polyline points="${values.map((v, i) => px(i) + ',' + py(v)).join(' ')}"/>`;
values.forEach((v, i) => { out += `<circle cx="${px(i)}" cy="${py(v)}" r="5"/>`; });
callouts.forEach(([t, x, y]) => { out += `<text x="${x}" y="${y + 3}" text-anchor="middle">${t}</text>`; });
days.forEach((d, i) => {
  out += `<text class="tick" text-anchor="end" transform="translate(${px(i) + 3} 374) rotate(-90)">2019年${d}</text>`;
});
out += '<rect x="275" y="435" width="896" height="5" rx="2" fill="#efefef"/><rect x="275" y="435" width="126" height="5" rx="2" fill="#b3b3b3"/>';
document.getElementById('trend').innerHTML = out;

function bars(id, share, rows, inside) {
  const max = rows[0][1];
  document.getElementById(id).innerHTML = rows.map(([name, v], i) => {
    const inBar = inside && i === 0;
    return `<div class="row"><span class="label">${name}</span><div class="track">` +
      `<div class="bar" style="width:${(v / max * share).toFixed(2)}%">${inBar ? v : ''}</div>${inBar ? '' : `<span>${v}</span>`}</div></div>`;
  }).join('');
}
bars('staff', 84.2, [['XM0198', 1376], ['XM0507', 1271], ['XM0199', 1266], ['XM0731', 1256], ['(空白)', 1245],
  ['XM0029', 1089], ['XM0031', 1020], ['XM0203', 918], ['XM0030', 668]], true);
bars('kinds', 83.5, [['羽绒', 1723], ['大衣', 1631], ['棉褛', 1295], ['外套', 1255], ['连衣裙', 1249], ['连体裤', 1187],
  ['毛衣', 1140], ['卫衣', 991], ['牛仔', 893], ['裙', 881], ['衬衫', 784], ['小上衣', 769], ['裤', 768],
  ['牛仔裤', 758], ['T恤', 649], ['内搭', 111]], false);
bars('orders', 81.7, [['一单4件及以上', 3654], ['一单3件', 2452], ['一单两件', 1726], ['一单一件', 1005]], true);

const grid = '<rect x=".6" y=".6" width="14.800" height="14.800" rx="3"/><path d="M4.500.6v14.800M11.500.6v14.800M.6 4.500h14.800M.6 11.500h14.800"/>';
const linked = '<path d="M9 15.400H3.600a3 3 0 0 1-3-3V3.600a3 3 0 0 1 3-3h8.800a3 3 0 0 1 3 3M4.500.6v14.800M11.500.6v5M.6 4.500H10M.6 11.500h8M10 9V7.500a3 3 0 0 1 6 0V9"/>' +
  '<circle cx="14.500" cy="15.500" r="7.500" fill="#0e6b5c" stroke="none"/><path d="M11.500 15.500l2 2 4-4" stroke="#fff" stroke-width="1.800"/>';
const names = ['店铺表', '店铺月目标表', '度量值表', '服装图片', '零售单明细', '日期表', '员工表', '员工月目标表', '指标选择'];
document.getElementById('tables').innerHTML = names.map((n, i) =>
  `<li><button><svg class="open" viewBox="0 0 8 12"><path d="M1.500 1.500 6 6l-4.500 4.500"/></svg>` +
  `<svg class="grid" viewBox="0 0 16 16">${i === names.length - 1 ? linked : grid}</svg>${n}</button></li>`).join('');
```
